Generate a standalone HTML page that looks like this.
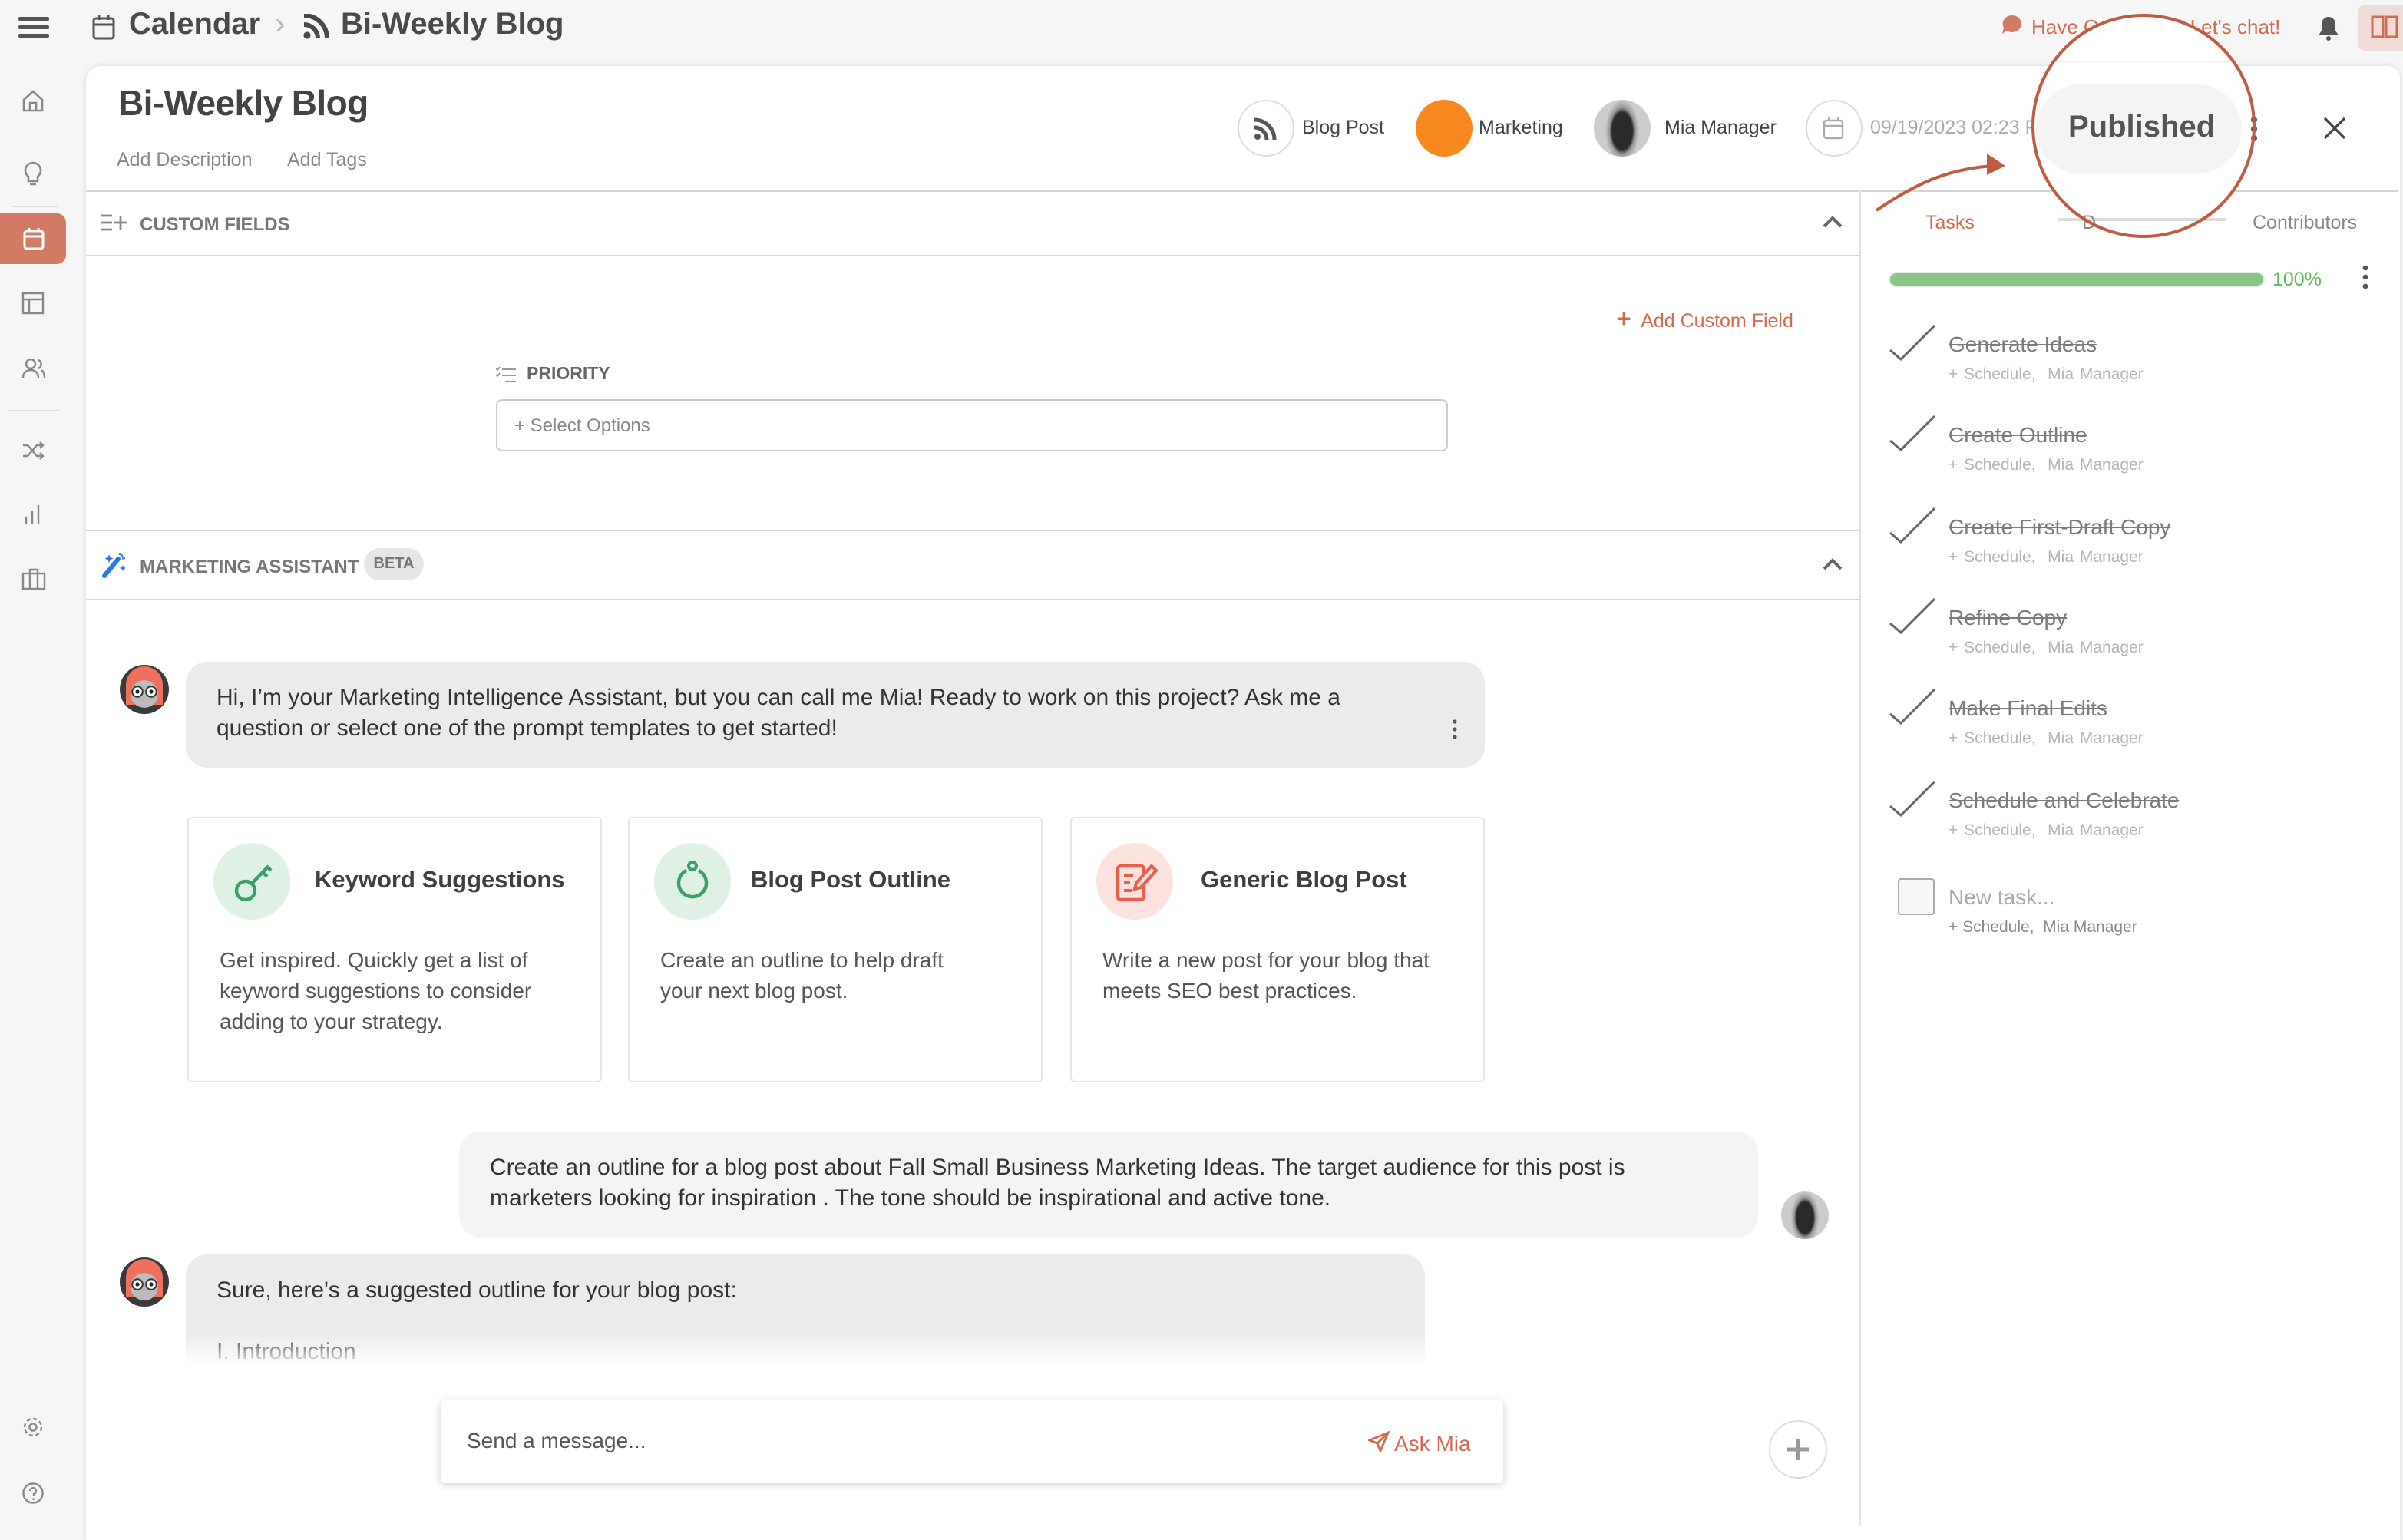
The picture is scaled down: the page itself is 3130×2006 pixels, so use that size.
<!DOCTYPE html>
<html><head><meta charset="utf-8">
<style>
*{box-sizing:border-box;margin:0;padding:0}
html,body{width:3130px;height:1988px;overflow:hidden;background:#f6f6f6}
#w{position:absolute;left:0;top:0;width:1565px;height:994px;transform:scale(2);transform-origin:0 0;font-family:"Liberation Sans",sans-serif;color:#444}
.a{position:absolute;white-space:nowrap}
.g{color:#888}
.hr{position:absolute;height:1px;background:#d4d4d4}
.card{position:absolute;background:#fff;border:1.5px solid #e3e5e8;border-radius:3px;top:532px;height:173px;width:270px}
.card .ic{position:absolute;left:16px;top:16px;width:50px;height:50px;border-radius:50%}
.card .t{position:absolute;left:82px;top:32px;font-size:15.5px;font-weight:bold;color:#3f3f3f}
.card .d{position:absolute;left:20px;top:82px;font-size:14px;line-height:20px;color:#555;white-space:normal;width:222px}
.task{position:absolute;left:1230px;width:320px;height:50px}
.task svg{position:absolute;left:0;top:-14px}
.task .n{position:absolute;left:39px;top:-8px;font-size:14px;color:#7b7b7b;text-decoration:line-through}
.task .s{position:absolute;left:39px;top:14px;font-size:10.5px;color:#b5b5b5;word-spacing:1px}
.side svg{position:absolute;left:14px}
</style></head><body><div id="w">
<!-- top bar -->
<svg class="a" style="left:12px;top:11px" width="20" height="14"><rect y="0" width="20" height="2.5" rx="1" fill="#555"/><rect y="5.5" width="20" height="2.5" rx="1" fill="#555"/><rect y="11" width="20" height="2.5" rx="1" fill="#555"/></svg>
<svg class="a" style="left:60px;top:9px" width="15" height="17"><rect x="1" y="3" width="13" height="13" rx="1.5" fill="none" stroke="#555" stroke-width="1.5"/><line x1="1" y1="7" x2="14" y2="7" stroke="#555" stroke-width="1.5"/><line x1="4.5" y1="1" x2="4.5" y2="4" stroke="#555" stroke-width="1.5"/><line x1="10.5" y1="1" x2="10.5" y2="4" stroke="#555" stroke-width="1.5"/></svg>
<div class="a" style="left:84px;top:5px;font-size:20px;font-weight:bold;color:#4a4a4a">Calendar</div>
<div class="a" style="left:179px;top:5px;font-size:20px;color:#b5b5b5">›</div>
<svg class="a" style="left:197px;top:9px" width="17" height="17"><circle cx="3" cy="14" r="2.3" fill="#4a4a4a"/><path d="M1 7a9 9 0 0 1 9 9M1 1a15 15 0 0 1 15 15" fill="none" stroke="#4a4a4a" stroke-width="3"/></svg>
<div class="a" style="left:222px;top:5px;font-size:20px;font-weight:bold;color:#4a4a4a">Bi-Weekly Blog</div>
<svg class="a" style="left:1303px;top:9px" width="14" height="14"><path d="M7 1a6 5.5 0 1 1-3 10l-3 2 1-4A6 5.5 0 0 1 7 1z" fill="#d27a64"/></svg>
<div class="a" style="left:1323px;top:10px;font-size:13px;color:#d06b52">Have Questions? Let's chat!</div>
<svg class="a" style="left:1509px;top:10px" width="15" height="17"><path d="M7.5 1c-3 0-4.5 2.5-4.5 5v4l-2 3h13l-2-3V6c0-2.5-1.5-5-4.5-5z" fill="#555"/><circle cx="7.5" cy="15" r="1.5" fill="#555"/></svg>
<div class="a" style="left:1536px;top:3px;width:34px;height:30px;background:#f0dcd6;border-radius:4px"></div>
<svg class="a" style="left:1544px;top:9px" width="18" height="17"><path d="M1 2h7v13H1zM10 2h7v13h-7z" fill="none" stroke="#d06b52" stroke-width="1.5"/></svg>
<!-- sidebar -->
<div class="side">
<svg style="top:58px" width="15" height="15"><path d="M1.5 7L7.5 1.5 13.5 7V14h-12z M5.5 14V9h4v5" fill="none" stroke="#888" stroke-width="1.3"/></svg>
<svg style="top:105px" width="15" height="17"><path d="M7.5 1a5 5 0 0 0-3 9v3h6v-3a5 5 0 0 0-3-9z M5.5 15h4" fill="none" stroke="#888" stroke-width="1.3"/></svg>
<div class="a" style="left:8px;top:134px;width:30px;height:1px;background:#ddd"></div>
<div class="a" style="left:0;top:139px;width:43px;height:33px;background:#d27a64;border-radius:0 6px 6px 0"></div>
<svg style="top:148px;left:15px" width="14" height="15"><rect x="1" y="2.5" width="12" height="11.5" rx="1.5" fill="none" stroke="#fff" stroke-width="1.5"/><line x1="1" y1="6" x2="13" y2="6" stroke="#fff" stroke-width="1.5"/><line x1="4" y1="0.5" x2="4" y2="3" stroke="#fff" stroke-width="1.5"/><line x1="10" y1="0.5" x2="10" y2="3" stroke="#fff" stroke-width="1.5"/></svg>
<svg style="top:190px" width="15" height="15"><rect x="1" y="1" width="13" height="13" fill="none" stroke="#888" stroke-width="1.2"/><path d="M1 5h13M5 5v9" stroke="#888" stroke-width="1.2"/></svg>
<svg style="top:233px" width="16" height="14"><circle cx="6" cy="4" r="3" fill="none" stroke="#888" stroke-width="1.2"/><path d="M1 13c0-3 2-5 5-5s5 2 5 5M11 1.5a3 3 0 0 1 0 5.5M13 8c1.5 1 2 3 2 5" fill="none" stroke="#888" stroke-width="1.2"/></svg>
<div class="a" style="left:5px;top:267px;width:35px;height:1px;background:#ddd"></div>
<svg style="top:287px" width="15" height="13"><path d="M1 3h3l6 7h4M1 10h3l6-7h4M12 1l2 2-2 2M12 8l2 2-2 2" fill="none" stroke="#888" stroke-width="1.2"/></svg>
<svg style="top:328px" width="15" height="14"><path d="M3 13V9M7 13V5M11 13V1" stroke="#888" stroke-width="1.2"/></svg>
<svg style="top:370px" width="16" height="14"><rect x="1" y="3.5" width="14" height="10" fill="none" stroke="#888" stroke-width="1.2"/><path d="M5.5 3.5V1h5v2.5M5.5 3.5v10M10.5 3.5v10" fill="none" stroke="#888" stroke-width="1.2"/></svg>
<svg style="top:922px" width="15" height="15"><circle cx="7.5" cy="7.5" r="2.3" fill="none" stroke="#888" stroke-width="1.2"/><circle cx="7.5" cy="7.5" r="5.5" fill="none" stroke="#888" stroke-width="1.2" stroke-dasharray="2.5 1.8"/></svg>
<svg style="top:965px" width="15" height="15"><circle cx="7.5" cy="7.5" r="6.3" fill="none" stroke="#888" stroke-width="1.2"/><path d="M5.5 6a2 2 0 1 1 2.5 2v1.5" fill="none" stroke="#888" stroke-width="1.2"/><circle cx="7.8" cy="11.3" r=".7" fill="#888"/></svg>
</div>
<!-- main card -->
<div class="a" style="left:56px;top:43px;width:1507px;height:960px;background:#fff;border-radius:10px 8px 0 0;box-shadow:0 0 4px rgba(0,0,0,.12)"></div>
<div class="a" style="left:77px;top:54px;font-size:23px;font-weight:bold;color:#434343;letter-spacing:-.3px">Bi-Weekly Blog</div>
<div class="a g" style="left:76px;top:97px;font-size:12.5px">Add Description</div>
<div class="a g" style="left:187px;top:97px;font-size:12.5px">Add Tags</div>
<div class="a" style="left:806px;top:65px;width:37px;height:37px;border:1px solid #ddd;border-radius:50%"></div>
<svg class="a" style="left:816px;top:76px" width="16" height="16"><circle cx="3" cy="13" r="2" fill="#555"/><path d="M1 7a8 8 0 0 1 8 8M1 2a13 13 0 0 1 13 13" fill="none" stroke="#555" stroke-width="2.5"/></svg>
<div class="a" style="left:848px;top:76px;font-size:12.5px;color:#444">Blog Post</div>
<div class="a" style="left:922px;top:65px;width:37px;height:37px;background:#f8871f;border-radius:50%"></div>
<div class="a" style="left:963px;top:76px;font-size:12.5px;color:#444">Marketing</div>
<div class="a" style="left:1038px;top:65px;width:37px;height:37px;border-radius:50%;background:radial-gradient(ellipse 30% 55% at 50% 55%,#2a2a2a 0 60%,#999 75%,#ccc 100%)"></div>
<div class="a" style="left:1084px;top:76px;font-size:12.5px;color:#444">Mia Manager</div>
<div class="a" style="left:1176px;top:65px;width:37px;height:37px;border:1px solid #ddd;border-radius:50%"></div>
<svg class="a" style="left:1187px;top:76px" width="14" height="15"><rect x="1" y="2.5" width="12" height="11.5" rx="1.5" fill="none" stroke="#aaa" stroke-width="1.2"/><line x1="1" y1="6" x2="13" y2="6" stroke="#aaa" stroke-width="1.2"/><line x1="4" y1="0.5" x2="4" y2="3" stroke="#aaa"/><line x1="10" y1="0.5" x2="10" y2="3" stroke="#aaa"/></svg>
<div class="a" style="left:1218px;top:76px;font-size:12.5px;color:#aaa">09/19/2023 02:23 P</div>
<svg class="a" style="left:1513px;top:76px" width="15" height="15"><path d="M1 1l13 13M14 1L1 14" stroke="#444" stroke-width="1.6"/></svg>
<div class="hr" style="left:56px;top:124px;width:1506px"></div>
<div class="a" style="left:1211px;top:124px;width:1px;height:870px;background:#e2e2e2"></div>
<!-- custom fields -->
<svg class="a" style="left:66px;top:139px" width="18" height="12"><path d="M0 1.5h7M0 6h7M0 10.5h7M8 6h9M12.5 1.5v9" stroke="#888" stroke-width="1.4"/></svg>
<div class="a" style="left:91px;top:139px;font-size:12px;font-weight:bold;color:#777">CUSTOM FIELDS</div>
<svg class="a" style="left:1187px;top:140px" width="13" height="9"><path d="M1 7.5l5.5-5.5 5.5 5.5" fill="none" stroke="#666" stroke-width="2"/></svg>
<div class="hr" style="left:56px;top:166px;width:1155px"></div>
<div class="a" style="left:1053px;top:202px;font-size:12.5px;color:#d06b52"><b style="font-size:16px;line-height:12px">+</b>&nbsp; Add Custom Field</div>
<svg class="a" style="left:323px;top:239px" width="13" height="11"><path d="M4 1.5h9M4 5.5h9M6 9.5h7" stroke="#999" stroke-width="1"/><path d="M0 1l1 1 1.5-2M0 5l1 1 1.5-2" stroke="#999" fill="none" stroke-width=".9"/></svg>
<div class="a" style="left:343px;top:238px;font-size:11.5px;font-weight:bold;color:#666">PRIORITY</div>
<div class="a" style="left:323px;top:260px;width:620px;height:34px;border:1px solid #ccc;border-radius:4px"></div>
<div class="a" style="left:335px;top:270px;font-size:12px;color:#888">+ Select Options</div>
<div class="hr" style="left:56px;top:345px;width:1155px"></div>
<svg class="a" style="left:66px;top:359px" width="18" height="18"><path d="M2 16L11 5" stroke="#2a7ae4" stroke-width="3" stroke-linecap="round"/><path d="M5 2l.8 2 2 .8-2 .8L5 7.6l-.8-2-2-.8 2-.8zM14 9l.6 1.4 1.4.6-1.4.6-.6 1.4-.6-1.4-1.4-.6 1.4-.6z" fill="#2a7ae4"/><path d="M13 2l1 2M15.5 4.5l-2 .3M12 1v1.5" stroke="#2a7ae4" stroke-width="1"/></svg>
<div class="a" style="left:91px;top:362px;font-size:12px;font-weight:bold;color:#777">MARKETING ASSISTANT</div>
<div class="a" style="left:237px;top:357px;width:39px;height:21px;background:#e6e6e6;border-radius:11px;font-size:10px;font-weight:bold;color:#777;text-align:center;line-height:21px">BETA</div>
<svg class="a" style="left:1187px;top:363px" width="13" height="9"><path d="M1 7.5l5.5-5.5 5.5 5.5" fill="none" stroke="#666" stroke-width="2"/></svg>
<div class="hr" style="left:56px;top:390px;width:1155px"></div>
<!-- chat -->
<svg class="a" style="left:77px;top:432px" width="34" height="34"><circle cx="17" cy="17" r="16" fill="#3a3a3a"/><path d="M5 27V14a12 12 0 0 1 24 0v13z" fill="#ef705b"/><ellipse cx="17" cy="20" rx="9" ry="9" fill="#bbb"/><circle cx="12.5" cy="18.5" r="3.4" fill="#fff" stroke="#333"/><circle cx="21.5" cy="18.5" r="3.4" fill="#fff" stroke="#333"/><circle cx="12.5" cy="18.5" r="1.3" fill="#222"/><circle cx="21.5" cy="18.5" r="1.3" fill="#222"/></svg>
<div class="a" style="left:121px;top:431px;width:846px;height:69px;background:#ebebed;border-radius:14px"></div>
<div class="a" style="left:141px;top:445px;font-size:15px;line-height:20px;color:#333;white-space:normal;width:790px">Hi, I’m your Marketing Intelligence Assistant, but you can call me Mia! Ready to work on this project? Ask me a question or select one of the prompt templates to get started!</div>
<svg class="a" style="left:945px;top:468px" width="5" height="14"><circle cx="2.5" cy="2" r="1.3" fill="#555"/><circle cx="2.5" cy="7" r="1.3" fill="#555"/><circle cx="2.5" cy="12" r="1.3" fill="#555"/></svg>
<div class="card" style="left:122px"><div class="ic" style="background:#dff0e4"></div>
<svg class="a" style="left:28px;top:26px" width="28" height="30"><circle cx="9" cy="21" r="6" fill="none" stroke="#3aa068" stroke-width="2.2"/><path d="M13 16.5L24 5M20 9l3 3M23 5.5l2.5 2.5" stroke="#3aa068" stroke-width="2.2" fill="none"/></svg>
<div class="t">Keyword Suggestions</div><div class="d">Get inspired. Quickly get a list of keyword suggestions to consider adding to your strategy.</div></div>
<div class="card" style="left:409px"><div class="ic" style="background:#dff0e4"></div>
<svg class="a" style="left:27px;top:26px" width="28" height="30"><path d="M10 8a9 9 0 1 0 8 0" fill="none" stroke="#3aa068" stroke-width="2.2"/><circle cx="14" cy="5" r="2.5" fill="none" stroke="#3aa068" stroke-width="2"/></svg>
<div class="t" style="left:79px">Blog Post Outline</div><div class="d" style="width:205px">Create an outline to help draft your next blog post.</div></div>
<div class="card" style="left:697px"><div class="ic" style="background:#fbe2de"></div>
<svg class="a" style="left:28px;top:28px" width="28" height="28"><rect x="2" y="3" width="17" height="22" rx="2" fill="none" stroke="#e8604c" stroke-width="2.2"/><path d="M6 9h6M6 14h4M6 19h5" stroke="#e8604c" stroke-width="2"/><path d="M24 3l3 3-10 11-4 1 1-4z" fill="#fbe2de" stroke="#e8604c" stroke-width="2"/></svg>
<div class="t" style="left:84px">Generic Blog Post</div><div class="d" style="width:240px">Write a new post for your blog that meets SEO best practices.</div></div>
<div class="a" style="left:299px;top:737px;width:846px;height:69px;background:#f4f4f5;border-radius:14px"></div>
<div class="a" style="left:319px;top:751px;font-size:15px;line-height:20px;color:#333;white-space:normal;width:800px">Create an outline for a blog post about Fall Small Business Marketing Ideas. The target audience for this post is marketers looking for inspiration . The tone should be inspirational and active tone.</div>
<div class="a" style="left:1160px;top:776px;width:31px;height:31px;border-radius:50%;background:radial-gradient(ellipse 30% 55% at 50% 55%,#2a2a2a 0 60%,#999 75%,#ccc 100%)"></div>
<svg class="a" style="left:77px;top:818px" width="34" height="34"><circle cx="17" cy="17" r="16" fill="#3a3a3a"/><path d="M5 27V14a12 12 0 0 1 24 0v13z" fill="#ef705b"/><ellipse cx="17" cy="20" rx="9" ry="9" fill="#bbb"/><circle cx="12.5" cy="18.5" r="3.4" fill="#fff" stroke="#333"/><circle cx="21.5" cy="18.5" r="3.4" fill="#fff" stroke="#333"/><circle cx="12.5" cy="18.5" r="1.3" fill="#222"/><circle cx="21.5" cy="18.5" r="1.3" fill="#222"/></svg>
<div class="a" style="left:121px;top:817px;width:807px;height:70px;background:#ebebed;border-radius:14px 14px 0 0"></div>
<div class="a" style="left:141px;top:832px;font-size:15px;color:#333">Sure, here's a suggested outline for your blog post:</div>
<div class="a" style="left:141px;top:872px;font-size:15px;color:#333">I. Introduction</div>
<div class="a" style="left:110px;top:868px;width:830px;height:22px;background:linear-gradient(rgba(255,255,255,0),#fff)"></div>
<div class="a" style="left:287px;top:912px;width:692px;height:54px;background:#fff;border-radius:3px;box-shadow:0 1px 5px rgba(0,0,0,.2)"></div>
<div class="a" style="left:304px;top:930px;font-size:14px;color:#555">Send a message...</div>
<svg class="a" style="left:891px;top:932px" width="14" height="14"><path d="M13 1L1 6l5 2 2 5z M6 8l7-7" fill="none" stroke="#d06b52" stroke-width="1.4"/></svg>
<div class="a" style="left:908px;top:932px;font-size:14px;color:#d06b52">Ask Mia</div>
<div class="a" style="left:1152px;top:925px;width:38px;height:38px;border:1px solid #ddd;border-radius:50%;background:#fff"></div>
<svg class="a" style="left:1163px;top:936px" width="16" height="16"><path d="M8 1v14M1 8h14" stroke="#999" stroke-width="2.5"/></svg>
<!-- right panel -->
<div class="a" style="left:1254px;top:138px;font-size:12.5px;color:#d06b52">Tasks</div>
<div class="a" style="left:1356px;top:138px;font-size:12.5px;color:#888">Details</div>
<div class="a" style="left:1467px;top:138px;font-size:12.5px;color:#888">Contributors</div>
<div class="a" style="left:1230px;top:177px;width:245px;height:10px;background:#e8e8e8;border-radius:5px"></div>
<div class="a" style="left:1231px;top:178px;width:243px;height:8px;background:#86c785;border-radius:4px"></div>
<div class="a" style="left:1480px;top:175px;font-size:12.5px;color:#5cb85c">100%</div>
<svg class="a" style="left:1538px;top:172px" width="5" height="18"><circle cx="2.5" cy="2.5" r="1.7" fill="#555"/><circle cx="2.5" cy="8.5" r="1.7" fill="#555"/><circle cx="2.5" cy="14.5" r="1.7" fill="#555"/></svg>
<div class="task" style="top:224px"><svg width="32" height="26"><path d="M1 18l7 6L30 2" fill="none" stroke="#666" stroke-width="1.5"/></svg><div class="n">Generate Ideas</div><div class="s">+ Schedule,&nbsp; Mia Manager</div></div>
<div class="task" style="top:283px"><svg width="32" height="26"><path d="M1 18l7 6L30 2" fill="none" stroke="#666" stroke-width="1.5"/></svg><div class="n">Create Outline</div><div class="s">+ Schedule,&nbsp; Mia Manager</div></div>
<div class="task" style="top:343px"><svg width="32" height="26"><path d="M1 18l7 6L30 2" fill="none" stroke="#666" stroke-width="1.5"/></svg><div class="n">Create First-Draft Copy</div><div class="s">+ Schedule,&nbsp; Mia Manager</div></div>
<div class="task" style="top:402px"><svg width="32" height="26"><path d="M1 18l7 6L30 2" fill="none" stroke="#666" stroke-width="1.5"/></svg><div class="n">Refine Copy</div><div class="s">+ Schedule,&nbsp; Mia Manager</div></div>
<div class="task" style="top:461px"><svg width="32" height="26"><path d="M1 18l7 6L30 2" fill="none" stroke="#666" stroke-width="1.5"/></svg><div class="n">Make Final Edits</div><div class="s">+ Schedule,&nbsp; Mia Manager</div></div>
<div class="task" style="top:521px"><svg width="32" height="26"><path d="M1 18l7 6L30 2" fill="none" stroke="#666" stroke-width="1.5"/></svg><div class="n">Schedule and Celebrate</div><div class="s">+ Schedule,&nbsp; Mia Manager</div></div>
<div class="a" style="left:1236px;top:572px;width:24px;height:24px;border:1px solid #aaa;border-radius:2px;background:#f7f7f7"></div>
<div class="a" style="left:1269px;top:576px;font-size:14px;color:#aaa">New task...</div>
<div class="a" style="left:1269px;top:598px;font-size:10.5px;color:#888">+ Schedule,&nbsp; Mia Manager</div>
<!-- annotation (magnified circle) -->
<svg class="a" style="left:1210px;top:0px" width="280" height="170"><ellipse cx="186" cy="82" rx="72" ry="72" fill="#fff"/><path d="M125 40h122" stroke="#eee" stroke-width="1"/><path d="M130 143h110" stroke="#ddd" stroke-width="2"/></svg>
<div class="a" style="left:1326px;top:55px;width:134px;height:58px;background:#f4f4f4;border-radius:29px"></div>
<div class="a" style="left:1347px;top:72px;font-size:20px;font-weight:bold;color:#555">Published</div>
<svg class="a" style="left:1465px;top:75px" width="6" height="18"><circle cx="3" cy="3" r="2" fill="#555"/><circle cx="3" cy="9" r="2" fill="#555"/><circle cx="3" cy="15" r="2" fill="#555"/></svg>
<div class="a" style="left:1356px;top:138px;font-size:12.5px;color:#888;width:12px;overflow:hidden">D</div>
<svg class="a" style="left:1210px;top:0px" width="280" height="170"><ellipse cx="186" cy="82" rx="72" ry="72" fill="none" stroke="#c15a42" stroke-width="2"/><path d="M12 137C40 118 60 110 88 108" fill="none" stroke="#c15a42" stroke-width="2"/><path d="M84 100l12 8-12 6z" fill="#c15a42"/></svg>
</div></body></html>
